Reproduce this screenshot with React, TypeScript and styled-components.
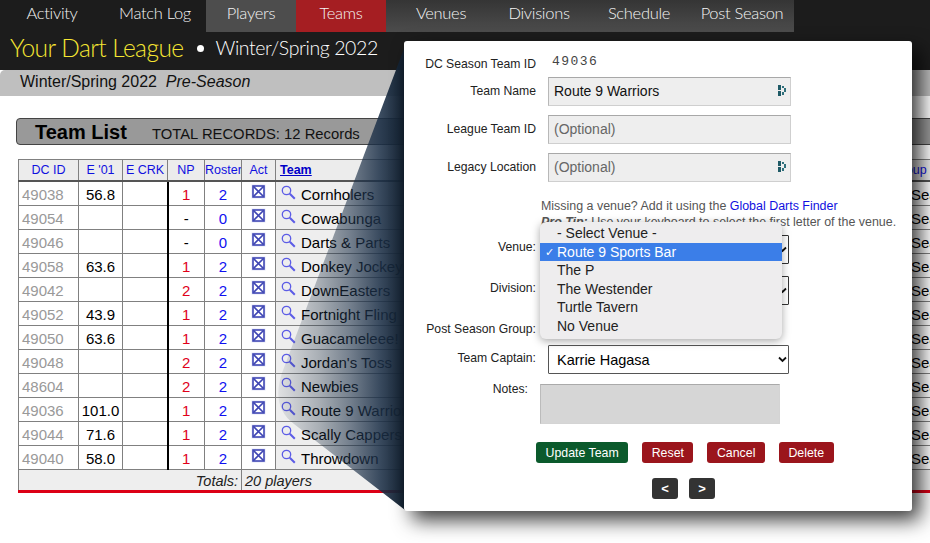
import React from 'react';
import styled, { createGlobalStyle } from 'styled-components';

const GlobalStyle = createGlobalStyle`
  html, body {
    margin: 0;
    background: #fff;
  }
`;

const Page = styled.div`
  position: relative;
  width: 930px;
  height: 543px;
  overflow: hidden;
  background: #fff;
  color: #000;
  font-family: "Liberation Sans", Arial, sans-serif;
`;

const Nav = styled.nav`
  display: flex;
  height: 32px;
  background: #1c1c1c;
`;

const NavItem = styled.div<{ $w: number; $end?: number; $tone?: 'plain' | 'grey' | 'red' | 'dim' }>`
  display: flex;
  align-items: center;
  justify-content: center;
  width: ${p => p.$w}px;
  padding: 0 ${p => p.$end ?? 0}px 6px 0;
  box-sizing: border-box;
  font-family: Lato, sans-serif;
  font-weight: 300;
  font-size: 16.5px;
  letter-spacing: -0.3px;
  color: #f4f4f4;
  background: ${p =>
    p.$tone === 'grey'
      ? '#4d4d4d'
      : p.$tone === 'red'
      ? '#a51e22'
      : p.$tone === 'dim'
      ? 'linear-gradient(#353535, #4c4c4c)'
      : 'transparent'};
`;

const TitleBar = styled.div`
  display: flex;
  align-items: center;
  height: 38px;
  padding: 0 0 7px 10px;
  box-sizing: border-box;
  background: #1c1c1c;
  font-family: Lato, sans-serif;
  font-weight: 300;
`;

const LeagueName = styled.span`
  font-size: 24.5px;
  letter-spacing: -0.55px;
  color: #f6e632;
`;

const TitleDot = styled.span`
  width: 7px;
  height: 7px;
  margin: 2px 12px 0 13px;
  border-radius: 50%;
  background: #fff;
`;

const SeasonName = styled.span`
  font-size: 19.5px;
  letter-spacing: -0.4px;
  color: #fff;
`;

const SubBar = styled.div`
  height: 26px;
  padding: 0 0 0 20px;
  background: #bfbfbf;
  border-top-left-radius: 5px;
  font-size: 16px;
  line-height: 24px;
  color: #111;
  white-space: pre;

  em {
    font-style: italic;
  }
`;

const ListBar = styled.div`
  display: flex;
  align-items: center;
  width: 1000px;
  height: 27px;
  margin: 22px 0 0 16px;
  padding: 1px 0 0 18px;
  box-sizing: border-box;
  border: 1px solid #444;
  border-radius: 4px;
  background: #999;
`;

const ListTitle = styled.b`
  width: 117px;
  font-size: 20px;
  color: #000;
`;

const ListCount = styled.span`
  padding-top: 3px;
  font-size: 14.8px;
  color: #111;
`;

const Table = styled.table`
  width: 1000px;
  margin: 14px 0 0 18px;
  border-collapse: collapse;
  table-layout: fixed;
`;

const Head = styled.th<{ $left?: boolean; $pad?: number }>`
  height: 20px;
  padding: 0 0 0 ${p => p.$pad ?? 0}px;
  border: 1px solid #808080;
  border-bottom: 2px solid #555;
  background: #ececec;
  font-size: 12.5px;
  font-weight: normal;
  color: #1010e0;
  text-align: ${p => (p.$left ? 'left' : 'center')};
  white-space: nowrap;
  overflow: hidden;
`;

const TeamHead = styled.span`
  padding-left: 4px;
  font-weight: bold;
  text-decoration: underline;
  color: #0000c8;
`;

const Cell = styled.td<{ $color?: string; $rule?: boolean; $left?: boolean }>`
  height: 21px;
  padding: 2px 0 0 ${p => (p.$left ? 3 : 0)}px;
  border: 1px solid #808080;
  border-right: ${p => (p.$rule ? '2px solid #000' : '1px solid #808080')};
  font-size: 15px;
  line-height: 18px;
  color: ${p => p.$color ?? '#000'};
  text-align: ${p => (p.$left ? 'left' : 'center')};
  white-space: nowrap;
  overflow: hidden;
`;

const ActBox = styled.span`
  display: inline-block;
  height: 15px;
  margin-top: -2px;
  vertical-align: top;
`;

const TeamCell = styled.td`
  height: 21px;
  padding: 2px 0 0 5px;
  border: 1px solid #808080;
  background: #eeeeee;
  font-size: 15px;
  line-height: 18px;
  white-space: nowrap;
  overflow: hidden;
`;

const TeamRow = styled.div`
  display: flex;
  gap: 5px;
`;

const LensBox = styled.span`
  height: 15px;
  margin-top: -1px;
`;

const SeasonCell = styled.td`
  height: 21px;
  padding: 2px 0 0 25px;
  border: 1px solid #808080;
  font-size: 15px;
  line-height: 18px;
`;

const TotalsLabel = styled.td`
  height: 18px;
  padding: 2px 3px 0 0;
  border: 1px solid #808080;
  border-bottom: 3px solid #dc0016;
  background: #eeeeee;
  font-size: 14.5px;
  font-style: italic;
  color: #222;
  text-align: right;
`;

const TotalsValue = styled(TotalsLabel)`
  padding: 2px 0 0 3px;
  text-align: left;
`;

const Wedge = styled.svg`
  position: absolute;
  left: 0;
  top: 0;
  pointer-events: none;
`;

const Modal = styled.div`
  position: absolute;
  left: 404px;
  top: 41px;
  width: 508px;
  height: 470px;
  padding-top: 13px;
  box-sizing: border-box;
  border-radius: 3px;
  background: #fff;
  box-shadow: 8px 9px 20px rgba(0, 0, 0, 0.78);
`;

const FormRow = styled.div<{ $top?: number }>`
  display: grid;
  grid-template-columns: 132px 243px;
  column-gap: 12px;
  margin-top: ${p => p.$top ?? 0}px;
`;

const Label = styled.label<{ $pad?: number }>`
  padding-top: ${p => p.$pad ?? 4}px;
  font-size: 12.2px;
  line-height: 16px;
  color: #222;
  text-align: right;
  white-space: nowrap;
`;

const MonoValue = styled.span`
  padding: 0 0 0 4px;
  height: 18px;
  font-family: "Liberation Mono", monospace;
  font-size: 13px;
  line-height: 15px;
  letter-spacing: 1.45px;
  color: #444;
`;

const Field = styled.div<{ $muted?: boolean }>`
  display: flex;
  align-items: center;
  justify-content: space-between;
  height: 29px;
  padding: 0 3px 2px 5px;
  box-sizing: border-box;
  border: 1px solid #cfcfcf;
  border-top-color: #a8a8a8;
  border-left-color: #b8b8b8;
  background: #eeeeee;
  font-size: 14px;
  color: ${p => (p.$muted ? '#666' : '#111')};
`;

const Help = styled.div`
  margin: 16px 0 5px 137px;
  font-size: 12.45px;
  line-height: 16px;
  color: #555;
  white-space: nowrap;

  a {
    color: #1010e0;
    text-decoration: none;
  }
`;

const SelectBox = styled.div`
  display: flex;
  align-items: center;
  justify-content: space-between;
  width: 241px;
  height: 29px;
  padding: 0 1px 0 8px;
  box-sizing: border-box;
  border: 1px solid #333;
  border-radius: 1px;
  background: #fff;
  font-size: 14.5px;
  color: #000;
`;

const CaptainBox = styled(SelectBox)`
  margin-top: -1px;
  border: 1.5px solid #555;
`;

const Spacer = styled.div`
  height: 29px;
`;

const NotesRow = styled.div`
  display: grid;
  grid-template-columns: 124px 240px;
  column-gap: 12px;
  margin-top: 7px;
`;

const NotesBox = styled.div`
  height: 40px;
  margin-top: 3px;
  box-sizing: border-box;
  border: 1px solid #d4d4d4;
  border-top-color: #aaa;
  border-left-color: #bbb;
  background: #d6d6d6;
`;

const Actions = styled.div`
  display: flex;
  gap: 14px;
  margin: 18px 0 0 132px;
`;

const Button = styled.button<{ $green?: boolean }>`
  height: 21px;
  padding: 0 9.5px;
  border: 0;
  border-radius: 3px;
  background: ${p => (p.$green ? '#0b5a2c' : '#9b151c')};
  font-family: "Liberation Sans", Arial, sans-serif;
  font-size: 12.35px;
  color: #fff;
`;

const Pager = styled.div`
  display: flex;
  gap: 11px;
  margin: 15px 0 0 248px;
`;

const PagerButton = styled.button`
  width: 26px;
  height: 21px;
  padding: 0;
  border: 0;
  border-radius: 3px;
  background: #333;
  font-family: "Liberation Sans", Arial, sans-serif;
  font-size: 13px;
  font-weight: bold;
  color: #fff;
`;

const Menu = styled.div`
  position: absolute;
  left: 136px;
  top: 181px;
  width: 242px;
  padding: 2px 0 3px;
  box-sizing: border-box;
  border-radius: 6px;
  background: #eeedee;
  box-shadow: 0 2px 9px rgba(0, 0, 0, 0.35);
  font-size: 14px;
  color: #222;
`;

const MenuItem = styled.div<{ $active?: boolean }>`
  position: relative;
  height: 18.6px;
  padding-left: 17px;
  line-height: 18px;
  background: ${p => (p.$active ? '#3b7ee8' : 'transparent')};
  color: ${p => (p.$active ? '#fff' : '#222')};
`;

const MenuTick = styled.span`
  position: absolute;
  left: 5px;
  top: 0;
  font-size: 11px;
`;

const columns = [60, 44, 45, 37, 37, 34, 610, 133];

const teams = [
  ['49038', '56.8', '1', '2', 'Cornholers'],
  ['49054', '', '-', '0', 'Cowabunga'],
  ['49046', '', '-', '0', 'Darts & Parts'],
  ['49058', '63.6', '1', '2', 'Donkey Jockeys'],
  ['49042', '', '2', '2', 'DownEasters'],
  ['49052', '43.9', '1', '2', 'Fortnight Fling'],
  ['49050', '63.6', '1', '2', 'Guacameleee!'],
  ['49048', '', '2', '2', "Jordan's Toss"],
  ['48604', '', '2', '2', 'Newbies'],
  ['49036', '101.0', '1', '2', 'Route 9 Warriors'],
  ['49044', '71.6', '1', '2', 'Scally Cappers'],
  ['49040', '58.0', '1', '2', 'Throwdown'],
];

const ActIcon = () => (
  <svg width="15" height="15" viewBox="0 0 15 15">
    <rect x="0.5" y="0.5" width="14" height="14" fill="#e4e6f6" />
    <rect x="2" y="2" width="11" height="11" fill="#fff" stroke="#3f46b4" strokeWidth="1.6" />
    <path d="M2.5 2.5 12.5 12.5M12.5 2.5 2.5 12.5" stroke="#3f46b4" strokeWidth="1.7" />
  </svg>
);

const LensIcon = () => (
  <svg width="15" height="15" viewBox="0 0 15 15" fill="none">
    <circle cx="5.5" cy="5.5" r="4.2" stroke="#5c5ce6" strokeWidth="1.3" />
    <path d="M8.8 8.8 13.8 13.8" stroke="#5c5ce6" strokeWidth="2" />
  </svg>
);

const KeyIcon = () => (
  <svg width="9" height="11" viewBox="0 0 9 11">
    <path d="M0 0H3V5H0ZM0 6H3V11H0Z" fill="#1f5a66" />
    <path d="M4 1H6V3H4ZM6 3H8V7H6ZM4 7H6V10H4Z" fill="#2f6f7b" />
  </svg>
);

const Chevron = () => (
  <svg width="9" height="7" viewBox="0 0 9 7" fill="none">
    <path d="M1 1.5 4.5 5 8 1.5" stroke="#111" strokeWidth="1.8" />
  </svg>
);

const npColor = (np: string) => (np === '-' ? '#000' : '#e0001a');

const App = () => (
  <Page>
    <GlobalStyle />
    <Nav>
      <NavItem $w={104}>Activity</NavItem>
      <NavItem $w={102}>Match Log</NavItem>
      <NavItem $w={90} $tone="grey">Players</NavItem>
      <NavItem $w={90} $tone="red">Teams</NavItem>
      <NavItem $w={110} $tone="dim">Venues</NavItem>
      <NavItem $w={86} $tone="dim">Divisions</NavItem>
      <NavItem $w={114} $tone="dim">Schedule</NavItem>
      <NavItem $w={98} $end={6} $tone="dim">Post Season</NavItem>
    </Nav>
    <TitleBar>
      <LeagueName>Your Dart League</LeagueName>
      <TitleDot />
      <SeasonName>Winter/Spring 2022</SeasonName>
    </TitleBar>
    <SubBar>
      Winter/Spring 2022  <em>Pre-Season</em>
    </SubBar>
    <ListBar>
      <ListTitle>Team List</ListTitle>
      <ListCount>TOTAL RECORDS: 12 Records</ListCount>
    </ListBar>
    <Table>
      <colgroup>
        {columns.map((w, i) => (
          <col key={i} width={w} />
        ))}
      </colgroup>
      <thead>
        <tr>
          <Head>DC ID</Head>
          <Head>E '01</Head>
          <Head>E CRK</Head>
          <Head>NP</Head>
          <Head>Roster</Head>
          <Head>Act</Head>
          <Head $left>
            <TeamHead>Team</TeamHead>
          </Head>
          <Head $left $pad={6}>Group</Head>
        </tr>
      </thead>
      <tbody>
        {teams.map(([id, e01, np, roster, name]) => (
          <tr key={id}>
            <Cell $color="#999" $left>{id}</Cell>
            <Cell>{e01}</Cell>
            <Cell $rule />
            <Cell $color={npColor(np)}>{np}</Cell>
            <Cell $color="#1010f0">{roster}</Cell>
            <Cell>
              <ActBox>
                <ActIcon />
              </ActBox>
            </Cell>
            <TeamCell>
              <TeamRow>
                <LensBox>
                  <LensIcon />
                </LensBox>
                {name}
              </TeamRow>
            </TeamCell>
            <SeasonCell>Sea</SeasonCell>
          </tr>
        ))}
        <tr>
          <TotalsLabel colSpan={5}>Totals:</TotalsLabel>
          <TotalsValue colSpan={3}>20 players</TotalsValue>
        </tr>
      </tbody>
    </Table>

    <Wedge width="930" height="543" viewBox="0 0 930 543">
      <defs>
        <linearGradient id="wedge" gradientUnits="userSpaceOnUse" x1="277" y1="0" x2="405" y2="0">
          <stop offset="0" stopColor="#16283c" stopOpacity="0.06" />
          <stop offset="0.33" stopColor="#16283c" stopOpacity="0.32" />
          <stop offset="0.57" stopColor="#1c3048" stopOpacity="0.58" />
          <stop offset="0.8" stopColor="#1a2e46" stopOpacity="0.85" />
          <stop offset="1" stopColor="#12202f" stopOpacity="1" />
        </linearGradient>
      </defs>
      <path d="M405 46 L285 365 Q268 405 294 424 L405 510 Z" fill="url(#wedge)" />
    </Wedge>

    <Modal>
      <FormRow>
        <Label $pad={2}>DC Season Team ID</Label>
        <MonoValue>49036</MonoValue>
      </FormRow>
      <FormRow $top={5}>
        <Label $pad={6}>Team Name</Label>
        <Field>
          Route 9 Warriors
          <KeyIcon />
        </Field>
      </FormRow>
      <FormRow $top={9}>
        <Label $pad={6}>League Team ID</Label>
        <Field $muted>(Optional)</Field>
      </FormRow>
      <FormRow $top={9}>
        <Label $pad={6}>Legacy Location</Label>
        <Field $muted>
          (Optional)
          <KeyIcon />
        </Field>
      </FormRow>
      <Help>
        Missing a venue? Add it using the <a>Global Darts Finder</a>
        <br />
        <b>
          <i>Pro Tip:</i>
        </b>{' '}
        Use your keyboard to select the first letter of the venue.
      </Help>
      <FormRow>
        <Label>Venue:</Label>
        <SelectBox>
          Route 9 Sports Bar
          <Chevron />
        </SelectBox>
      </FormRow>
      <FormRow $top={12}>
        <Label>Division:</Label>
        <SelectBox>
          <span />
          <Chevron />
        </SelectBox>
      </FormRow>
      <FormRow $top={12}>
        <Label>Post Season Group:</Label>
        <Spacer />
      </FormRow>
      <FormRow>
        <Label>Team Captain:</Label>
        <CaptainBox>
          Karrie Hagasa
          <Chevron />
        </CaptainBox>
      </FormRow>
      <NotesRow>
        <Label $pad={0}>Notes:</Label>
        <NotesBox />
      </NotesRow>
      <Actions>
        <Button $green>Update Team</Button>
        <Button>Reset</Button>
        <Button>Cancel</Button>
        <Button>Delete</Button>
      </Actions>
      <Pager>
        <PagerButton>&lt;</PagerButton>
        <PagerButton>&gt;</PagerButton>
      </Pager>
      <Menu>
        <MenuItem>- Select Venue -</MenuItem>
        <MenuItem $active>
          <MenuTick>✓</MenuTick>
          Route 9 Sports Bar
        </MenuItem>
        <MenuItem>The P</MenuItem>
        <MenuItem>The Westender</MenuItem>
        <MenuItem>Turtle Tavern</MenuItem>
        <MenuItem>No Venue</MenuItem>
      </Menu>
    </Modal>
  </Page>
);

export default App;
